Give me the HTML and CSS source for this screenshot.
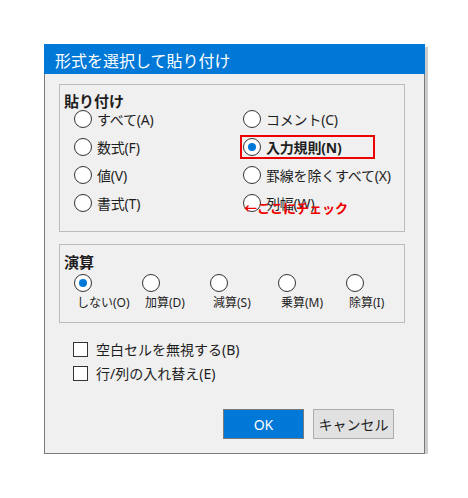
FILE: index.html
```html
<!DOCTYPE html>
<html lang="ja">
<head>
    <meta charset="UTF-8">
    <title>形式を選択して貼り付け</title>
    <link rel="stylesheet" href="styles.css">
</head>
<body>
    <div class="dialog">
        <div class="title-bar">形式を選択して貼り付け</div>

        <div class="dialog-body">
            <div class="group paste-group">
                <div class="group-title">貼り付け</div>
                <div class="paste-grid">
                    <label class="option"><span class="radio"></span>すべて(A)</label>
                    <label class="option"><span class="radio"></span>コメント(C)</label>
                    <label class="option"><span class="radio"></span>数式(F)</label>
                    <label class="option marked"><span class="radio on"></span>入力規則(N)</label>
                    <label class="option"><span class="radio"></span>値(V)</label>
                    <label class="option"><span class="radio"></span>罫線を除くすべて(X)</label>
                    <label class="option"><span class="radio"></span>書式(T)</label>
                    <label class="option note-holder"><span class="radio"></span>列幅(W)<span class="note">←ここにチェック</span></label>
                </div>
            </div>

            <div class="group calc-group">
                <div class="group-title">演算</div>
                <div class="calc-row">
                    <label class="calc-item"><span class="radio on"></span><span class="calc-label">しない(O)</span></label>
                    <label class="calc-item"><span class="radio"></span><span class="calc-label">加算(D)</span></label>
                    <label class="calc-item"><span class="radio"></span><span class="calc-label">減算(S)</span></label>
                    <label class="calc-item"><span class="radio"></span><span class="calc-label">乗算(M)</span></label>
                    <label class="calc-item"><span class="radio"></span><span class="calc-label">除算(I)</span></label>
                </div>
            </div>

            <div class="checks">
                <label class="check"><span class="box"></span>空白セルを無視する(B)</label>
                <label class="check"><span class="box"></span>行/列の入れ替え(E)</label>
            </div>

            <div class="buttons">
                <button class="button primary">OK</button>
                <button class="button">キャンセル</button>
            </div>
        </div>
    </div>
</body>
</html>
```

FILE: styles.css
```css
:root {
    --accent: #0078d7;
    --face: #f0f0f0;
    --text: #1e1e1e;
    --mark: #ee0000;
}

* {
    box-sizing: border-box;
    margin: 0;
    padding: 0;
}

body {
    background: #ffffff;
    font-family: 'Noto Sans', 'Noto Sans CJK JP', sans-serif;
    color: var(--text);
}

.dialog {
    width: 381px;
    height: 410px;
    margin: 44px 0 0 44px;
    background: var(--face);
    border: 1px solid #7a7a7a;
    border-top: none;
    box-shadow: 3px 3px 0 #cccccc;
}

.title-bar {
    height: 30px;
    margin: 0 -1px;
    padding: 0 11px;
    background: var(--accent);
    color: #ffffff;
    font-size: 16px;
    line-height: 34px;
}

.dialog-body {
    padding: 10px 19px 0 14px;
}

.group {
    border: 1px solid #bcbcbc;
}

.group-title {
    font-size: 15px;
    font-weight: bold;
    line-height: 16px;
    padding-left: 4px;
}

/* paste options */
.paste-group {
    height: 148px;
    padding-top: 8px;
}

.paste-grid {
    display: grid;
    grid-template-columns: 169px 1fr;
    grid-auto-rows: 28px;
    margin-top: -4px;
    padding-left: 14px;
}

.option {
    display: flex;
    align-items: center;
    gap: 5px;
    font-size: 14px;
    letter-spacing: -0.2px;
    white-space: nowrap;
}

.radio {
    flex: none;
    width: 18px;
    height: 18px;
    border: 1px solid #333333;
    border-radius: 50%;
    background: #ffffff;
    display: flex;
    align-items: center;
    justify-content: center;
}

.radio.on::after {
    content: '';
    width: 8px;
    height: 8px;
    border-radius: 50%;
    background: var(--accent);
}

.marked {
    align-self: center;
    height: 20px;
    width: 131px;
    margin-left: -1px;
    padding-left: 1px;
    outline: 2px solid var(--mark);
    font-weight: bold;
}

.note-holder {
    position: relative;
}

.note {
    position: absolute;
    left: 1px;
    top: 12px;
    color: var(--mark);
    font-size: 13px;
    font-weight: bold;
    line-height: 14px;
    letter-spacing: 0;
}

/* arithmetic */
.calc-group {
    height: 79px;
    margin-top: 12px;
    padding-top: 9px;
}

.calc-row {
    display: grid;
    grid-template-columns: repeat(5, 68px);
    padding: 4px 0 0 14px;
}

.calc-item {
    display: flex;
    flex-direction: column;
    align-items: flex-start;
}

.calc-label {
    margin: 3px 0 0 3px;
    font-size: 12px;
    line-height: 16px;
}

/* checkboxes */
.checks {
    margin-top: 14px;
    padding-left: 14px;
}

.check {
    display: flex;
    align-items: center;
    gap: 8px;
    height: 24px;
    font-size: 14px;
}

.box {
    flex: none;
    width: 15px;
    height: 15px;
    border: 1px solid #333333;
    background: #ffffff;
}

/* buttons */
.buttons {
    display: flex;
    justify-content: flex-end;
    gap: 9px;
    margin-top: 24px;
    padding-right: 11px;
}

.button {
    width: 81px;
    height: 30px;
    border: 1px solid #adadad;
    background: #e1e1e1;
    color: var(--text);
    font-family: inherit;
    font-size: 14px;
}

.button.primary {
    border-color: #7a7a7a;
    background: var(--accent);
    color: #ffffff;
}
```
